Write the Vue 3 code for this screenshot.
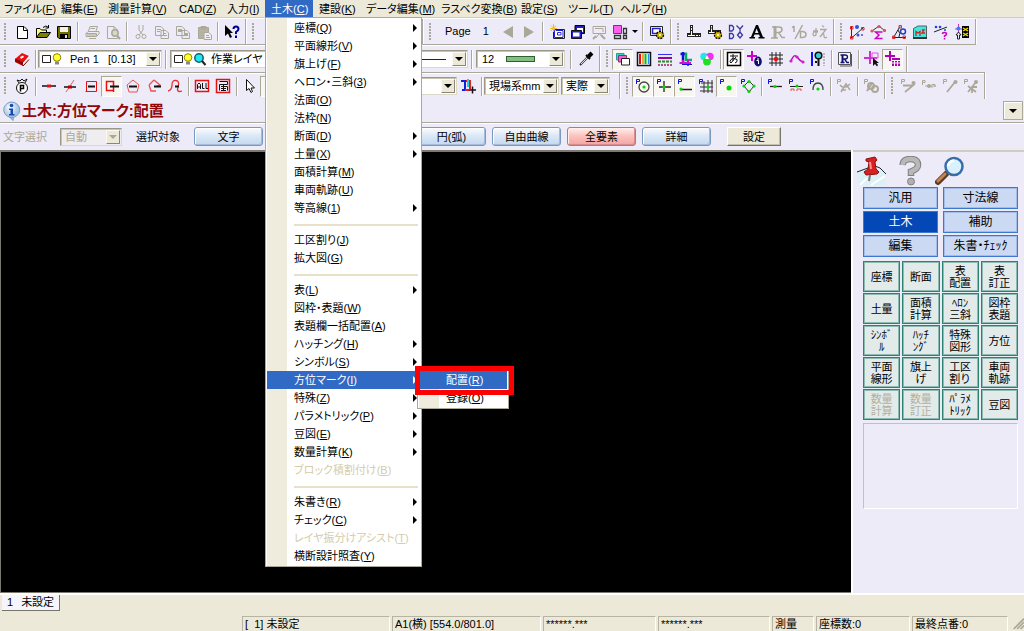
<script setup>
const menubar = [
  ['ファイル', 'F'], ['編集', 'E'], ['測量計算', 'V'], ['CAD', 'Z'], ['入力', 'I'], ['土木', 'C'],
  ['建設', 'K'], ['データ編集', 'M'], ['ラスベク変換', 'B'], ['設定', 'S'], ['ツール', 'T'], ['ヘルプ', 'H'],
]

const civilMenu = [
  { t: '座標', k: 'Q', sub: true }, { t: '平面線形', k: 'V', sub: true }, { t: '旗上げ', k: 'F', sub: true },
  { t: 'ヘロン・三斜', k: '3', sub: true }, { t: '法面', k: 'O' }, { t: '法枠', k: 'N' },
  { t: '断面', k: 'D', sub: true }, { t: '土量', k: 'X', sub: true }, { t: '面積計算', k: 'M' },
  { t: '車両軌跡', k: 'U' }, { t: '等高線', k: '1', sub: true }, { sep: true },
  { t: '工区割り', k: 'J' }, { t: '拡大図', k: 'G' }, { sep: true },
  { t: '表', k: 'L', sub: true }, { t: '図枠・表題', k: 'W' }, { t: '表題欄一括配置', k: 'A' },
  { t: 'ハッチング', k: 'H', sub: true }, { t: 'シンボル', k: 'S', sub: true },
  { t: '方位マーク', k: 'I', sub: true, open: true }, { t: '特殊', k: 'Z', sub: true },
  { t: 'パラメトリック', k: 'P', sub: true }, { t: '豆図', k: 'E', sub: true },
  { t: '数量計算', k: 'K', sub: true }, { t: 'ブロック積割付け', k: 'B', off: true }, { sep: true },
  { t: '朱書き', k: 'R', sub: true }, { t: 'チェック', k: 'C', sub: true },
  { t: 'レイヤ振分けアシスト', k: 'T', off: true }, { t: '横断設計照査', k: 'Y' },
]

const g = '#aca899'
const P = (d, c = '#000', w = 1) => `<path d="${d}" fill="none" stroke="${c}" stroke-width="${w}"/>`
const F = (d, c = '#000') => `<path d="${d}" fill="${c}"/>`
const pMark = (c = '#1414e0') => P('M1.5 6V1.5H4.5V3.5H2', c)
const dot = (x, y, c = '#00d800', r = 1.6) => `<circle cx="${x}" cy="${y}" r="${r}" fill="${c}"/>`

const icons = {
  fresh: '<path d="M3.5 2.5H10L13.5 6V14.5H3.5Z" fill="#fff" stroke="#000"/>' + P('M9.500 2.500V6.500H13.500'),
  open: '<path d="M1.500 13.500V4.500H5L6.500 6H11.500V8.500" fill="#ffff80" stroke="#000"/><path d="M1.500 13.500L5 8.500H15.500L12 13.500Z" fill="#808000" stroke="#000"/>' + P('M8 3.500Q11 .5 13.500 3.500M13.500 1V4H10.500'),
  save: '<path d="M2 2.500H14.500V14.500H3L1.500 13V2.500Z" fill="#707000" stroke="#000"/>' + F('M4 3H12V8H4Z', '#f4f2e6') + F('M4 10H12V14.500H4Z') + F('M9 11H11V14H9Z', '#ddd'),
  print: P('M4.500 7L6 2.500H13.500L12 7M4 7.500L2 9.500V12.500H12.500L15 10V7.500H4M2 9.500H12.500V12M5 14.500H12M6.500 4.500H11', g) + F('M3 10H12V12H3Z', '#cbc7b9'),
  preview: P('M2.500 2.500H9L12.500 6V14.500H2.500ZM9 2.500V6H12', g) + `<circle cx="10" cy="9" r="3.200" fill="#dad6ca" stroke="${g}" stroke-width="1.500"/>` + P('M12 11.500L15 15', g, 2),
  cut: P('M6 1V6L10 11M10 1V6L6 11', g) + `<circle cx="5" cy="12.500" r="2" fill="none" stroke="${g}"/><circle cx="11" cy="12.500" r="2" fill="none" stroke="${g}"/>`,
  copy: P('M1.500 2.500H7L9.500 5V11.500H1.500ZM7 6.500H12L14.500 9V14.500H7Z', g) + P('M3 5.500H7M3 7.500H6M9 9.500H12M9 11.500H13', g),
  copy2: P('M1.500 2.500H7L9.500 5V11.500H1.500ZM7 6.500H12L14.500 9V14.500H7Z', g) + F('M3 5H7V8H3ZM9 9H13V12H9Z', g),
  clip: `<path d="M2.500 3.500H12.500V14.500H2.500Z" fill="#b6b2a4" stroke="${g}"/><path d="M8 8.500H12.500L15.500 11V15.500H8Z" fill="#f0eef4" stroke="${g}"/>` + P('M5 2.500H10V5H5ZM10 11.500H13M10 13.500H14', g),
  help: F('M1 1V12L4 9.500L6 14L8 13L6 9H9Z') + P('M9.500 5Q9.500 2.500 12 2.500T14.500 5Q14.500 6.500 12 8V10', '#000090', 2) + F('M11 11.500H13V14H11Z', '#000090'),
  left: F('M13 2V14L3 8Z', g), right: F('M3 2V14L13 8Z', g),
  win1: '<path d="M4.500 5.500H15.500V14.500H4.500Z" fill="#fff" stroke="#222" /><path d="M5.500 6.500H14V13.500H5.500Z" fill="#fff" stroke="#2020d8"/><path d="M8.500 8.500H12V11H8.500Z" fill="#fff" stroke="#3030d0"/>' + P('M4.500 0V8M1 4.500H8M2 1.500L7 7M7 1.500L2 7', '#f0c020'),
  win2: '<path d="M5 1.500H14.500V9.500H5Z" fill="#2020c0" stroke="#000"/><path d="M7 4H13V8H7Z" fill="#fff"/><path d="M1.500 6.500H11.500V14.500H1.500Z" fill="#2020c0" stroke="#111"/><path d="M3 8.500H9.500V12.500H3Z" fill="#fff"/>',
  win3: P('M2 2.500H14.500V9.500H2ZM4 4.500H12V8M5 14L8 10M12 14L8 9', g) + P('M2 15L5 12M10 11L14 15', g, 2),
  pinkgrid: '<path d="M1.500 1.500H9.500V9.500H1.500Z" fill="#ff60f0" stroke="#c02020"/>' + P('M11.500 4.500H14.500V9.500H11.500ZM2.500 11.500H8.500V14.500H2.500ZM11.500 11.500H14.500V14.500H11.500Z', '#333', 1.300),
  wingear: '<path d="M1.500 2.500H13.500V11.500H1.500Z" fill="#fff" stroke="#222"/><path d="M3.500 4.500H11V9.500H3.500Z" fill="#fff" stroke="#2020d8" stroke-width="1.500"/><circle cx="11" cy="11" r="3.500" fill="#c8b400" stroke="#000" stroke-width="1.300" stroke-dasharray="2 1"/>' + dot(11, 11, '#fff', 1),
  ruler: F('M4 1H7V9H15V13H1V9H4Z', '#222') + P('M5.500 2V12M2 11.500H14', '#fff') + P('M4 3.500H7M4 6.500H7M9.500 9V13M12.500 9V13', '#222'),
  rulergear: F('M3 1H6V6H14V10H1V6H3Z', '#222') + P('M4.500 2V8M2 8.500H13', '#fff') + P('M3 4H6M9.500 6V10', '#222') + '<circle cx="11" cy="11" r="3.500" fill="#d8b400" stroke="#000" stroke-width="1.300" stroke-dasharray="2 1"/>' + dot(11, 11, '#fff', 1),
  ddyy: P('M1.500 1.500V7H4L5.500 5.500V3L4 1.500ZM1.500 9.500V14.500H4L5.500 13V11L4 9.500ZM8.500 1.500L12 5V8M15 1.500L12 5M12 8L9.500 11L12 14L14.500 11Z', '#3838a0', 1.300),
  boldA: F('M7 1H9L14 13H15.500V14.500H9.500V13H11L10 10.500H5.500L4.500 13H6V14.500H.5V13H2ZM7.500 4.500L6 9H9.500Z'),
  boldR: P('M2 3H9Q12 3 12 5.500T9 8.500H5M8.500 8.500L12 13.500H15M1 14H8', g, 1.500) + P('M5 2V14', g, 3),
  frac: P('M3 2V8M1 3.500L3 2M11.500 1L4 15M9.500 7.500V13.500H12Q15 13 15 10.500T12 7.500Z', g, 1.500),
  kana: P('M1 7H6M4 4V11Q1 13 1 10T6 8M10 1.500L12 3M8 5.500H14L8 13M10 10Q12 9 12 12T15 13', g, 1.300),
  s1: P('M2.500 3V14M2.500 14L14 4', '#303030') + P('M1.500 2.500H4V5H1.500ZM12.500 3.500H15V6H12.500ZM1.500 12.500H4V15H1.500Z', '#e02020') + dot(8, 3, '#3050e0', 2) + dot(9, 11, '#3050e0', 1.500) + dot(13, 11, '#3050e0', 1),
  s2: P('M2 7L9 2L15 7', '#333') + dot(9, 2.500, '#e05050') + dot(2, 7, '#e05050') + dot(14.500, 6.500, '#e05050') + P('M12.500 8H5.500L9 11L5.500 14.500H12.500', '#d000c0', 1.500),
  s3: P('M9 2.500L2.500 13.500H14M7 6Q10 9 8 13', '#222') + P('M8 1.500H10.500V4H8ZM1.500 12H4V14.500H1.500ZM12 12H14.500V14.500H12Z', '#e03030') + `<circle cx="12" cy="7.500" r="2.500" fill="none" stroke="#2040c0" stroke-width="1.500"/>`,
  s4: '<path d="M1.500 4.500L6 2H14.500V13.500H1.500Z" fill="#40e8e0" stroke="#506060"/>' + P('M4 12V7.500L6 9L8 7.500V12M10 6H12L10 9H13', '#d02020', 1.300) + F('M1 13H15V15H1Z', '#333'),
  s5: P('M1 8L14 3', '#222') + dot(3, 3, '#2040e0', 1.300) + dot(7, 3, '#2040e0', 1.300) + dot(12, 6, '#2040e0', 1) + P('M9.500 10Q9.500 8.500 11.500 8.500T13.500 10Q13.500 11 11.500 12V13M11.500 14V15.500', '#d000c0', 1.500),
  s6: P('M4.500 0V9M1 5H8', '#d030c0') + dot(4.500, 4.500, '#3080ff', 2) + P('M4.500 8L2 11H3.500V15H5.500V11H7Z', '#222') + F('M8 2H15V14H8Z') + P('M9 4L14 7M14 4L9 7M9 9L14 12M14 9L9 12', '#f0e000', 1.300),
  book: F('M1 8L8 2L15 5L9 12Z', '#e81010') + F('M1 8V11L9 15V12Z', '#a80000') + F('M9 12V15L15 8.500V5Z', '#f4f4f4') + P('M9 15L15 8.500M1 8L9 12', '#600000') + F('M6 6L9 4.500L10 6L7 8Z', '#fff'),
  dropper: P('M2 14L10 6', '#333', 2) + P('M3 13L10 6', '#ddd') + P('M8 4L12 8', '#000', 2) + P('M10.500 5.500L14 2', '#000', 4),
  layers: '<path d="M1.500 2.500H9V9H1.500Z" fill="#30d8d0" stroke="#20a0a0"/><path d="M3.500 4.500H11.500V11H3.500Z" fill="#f060d0" stroke="#903070"/><path d="M6.500 7.500H14.500V14H6.500Z" fill="#fff" stroke="#222"/>',
  stripes: '<path d="M1.500 1.500H14.500V14.500H1.500Z" fill="#fff" stroke="#111" stroke-width="1.500"/>' + P('M4 3V13', '#e01010', 2) + P('M7 3V13', '#ff8000', 1.500) + P('M9.500 3V13', '#00c000', 2) + P('M12.500 3V13', '#2090ff', 1.500),
  lines: P('M1 3.500H15', '#3030ff') + P('M1 7H15', '#a000a0', 2) + '<path d="M1 10.500H15" stroke="#209020" stroke-width="2" stroke-dasharray="3 1"/><path d="M1 14H15" stroke="#a02060" stroke-width="1.500" stroke-dasharray="2 1"/>',
  lmag: P('M5 1V11M2.500 3H7', '#1010d8', 2.500) + P('M8 1.500V9H14', '#00b060', 2.500) + P('M1.500 12H13M10 9V15M5 9V14', '#d010d0', 2) + P('M4 13.500H14', '#1010d8'),
  rgb: '<circle cx="5" cy="5.500" r="3.700" fill="#20e8e8"/><circle cx="11" cy="5.500" r="3.700" fill="#f030f0"/><circle cx="8" cy="10.500" r="3.900" fill="#20e020"/>' + F('M8 4L10 8L6 8Z', '#fff'),
  abox: '<path d="M1.500 1.500H14.500V14.500H1.500Z" fill="#fff" stroke="#000" stroke-width="1.500"/>' + P('M4 5H12M7 3V10M10 6L5 12Q3 11 5 8.500T11 8.500Q12 11 9 12', '#111'),
  plus0: P('M5 0V10M0 5H10', '#d000d0', 2) + `<ellipse cx="11" cy="10.500" rx="3.800" ry="5" fill="#101070"/>` + P('M11 7V9M9.500 9.500H11.500V13', '#fff', 1),
  gridred: P('M4 1V15M8 1V15M12 1V15M1 4H15M1 8H15M1 12H15', '#222') + dot(8, 8, '#e81010', 2.200),
  curve: P('M2 10Q5 2 8 6T14 11', '#c000c0', 1.500) + dot(2, 10, '#d020d0') + dot(8, 6, '#d020d0') + dot(14, 11, '#d020d0'),
  pins: P('M2 1V15', '#1010ff', 2) + '<circle cx="8.500" cy="4.500" r="3.300" fill="#40c8d0" stroke="#111" stroke-width="1.500"/>' + P('M8.500 8V15M5 11H7', '#111', 2) + '<path d="M14 2V15" stroke="#888" stroke-dasharray="2 1"/>',
  rbox: '<path d="M1.500 1.500H13.500V13.500H1.500Z" fill="#f4f4fb" stroke="#555"/>' + P('M14.500 3V15H3', '#555') + P('M3.500 4H8Q10.500 4 10.500 6T8 8H6M7.500 8L10 11.500H12M3.500 11.500H7.500', '#101070', 1.300) + P('M5.500 4V11', '#101070', 2),
  magcur: P('M6 0V13M0 7H13', '#d030d0', 2) + '<path d="M8 2H14V7H8Z" fill="none" stroke="#e050e0"/>' + F('M9 7V15L11 13L13 15.500L14 14L12.500 12H15Z', '#111'),
  magcal: P('M5 0V10M0 5H10', '#b000b0', 2) + '<path d="M7 7H15V15H7Z" fill="#b000b0"/>' + P('M7 9.500H15M7 12H15M9.500 9V15M12.500 9V15', '#fff'),
  bag: '<circle cx="8" cy="10" r="5.500" fill="#fff" stroke="#111"/>' + P('M5 5L3 2L6 3L8 1L10 3L13 1L11 5', '#111') + P('M6.500 13.500V7.500H9.500V10.500H7', '#000', 1.500),
  n1: P('M1 8H15', '#111', 1.500) + F('M6 6.500H10V9.500H6Z', '#e81010'),
  n2: P('M2 9H14', '#111', 1.500) + P('M4 14L12 2', '#e06060') + F('M6 7.500H10V10.500H6Z', '#c00000'),
  n3: P('M3.500 3.500H13.500V13.500H2.500', '#e81010') + P('M5 8.500H12', '#111', 2) + P('M3.500 3.500V13.500', '#e81010'),
  n4: P('M2.500 12.500V3.500H9.500V12.500ZM9.500 8V14', '#e81010', 1.500) + P('M6 8.500H15', '#111', 2),
  n5: P('M8 2L14 7L12 14H4L2 7Z', '#e85050') + P('M4 8.500H12', '#111', 2),
  n6: P('M8 2L14 7L11 8M3 7L8 2M3 7L5 13H10', '#e85050', 1.300) + P('M8 8.500H15', '#111', 2),
  n7: P('M1 13Q5 12 5 7T9 2.500T11 9T15 13', '#e83030', 1.300) + P('M8 8.500H12', '#111', 2),
  all: P('M1.500 2.500H14.500V13.500H1.500Z', '#e81010', 1.500) + P('M3.500 11V6.500L5 5L6.500 6.500V11M3.500 9H6.500M8.500 5V10.500H10.500M12 5V10.500H14', '#111'),
  zoku: P('M1.500 1.500H14.500V14.500H1.500Z', '#e81010', 1.500) + P('M4.500 3.500H12.500V6.500H4.500V12.500M6 8.500H12.500V12.500M6 10.500H11M8.500 7V12M6 12.500H11', '#111'),
  arrow: '<path d="M4.500 1.500V12.500L7 10.500L9 14.500L10.500 13.500L9 10H12.500Z" fill="#fff" stroke="#111"/>',
  lcur: P('M1 3H5V12M2 12H7', '#1020e0', 2) + P('M6 3H10V11', '#e02020', 2) + P('M8 1V9', '#20d0e0', 2) + P('M5 12H9', '#e02020', 2) + P('M9 12H16M12.500 8.500V15.500', '#111', 1.500),
  p1: pMark() + '<circle cx="9" cy="9" r="5" fill="none" stroke="#444" stroke-width="1.300"/>' + dot(9, 9),
  p2: pMark() + P('M8 3V14M3 9H15', '#222', 1.300) + dot(8, 9),
  p3: pMark() + P('M3 11.500H15', '#222', 1.500) + dot(4, 11),
  p4: P('M6 3V15M10 2V15M14 2V15M3 5H15M2 9H15M2 13H15', '#333') + pMark() + dot(10, 9),
  p5: pMark() + dot(10, 10, '#00d800', 2.500),
  p6: pMark() + P('M9 3L14 8L9 14L4 8Z', '#333') + dot(9, 3.500) + dot(14, 8) + dot(9, 13.500) + dot(4, 8),
  p7: pMark() + P('M3 8.500H15', '#222', 1.300) + dot(8, 8.500),
  p8: pMark() + P('M2 8.500H15', '#222') + dot(9, 8) + P('M3 13V11H6V13M9 13V11H13V13', '#e05050'),
  p9: pMark() + P('M4 12Q4 5 9 5T14 12', '#444', 1.300) + dot(9, 11),
  q1: pMark(g) + P('M5 14L10 6L14 12M4 7Q8 12 14 6M5 12H10', g, 1.500),
  q2: pMark(g) + `<circle cx="8" cy="8" r="3" fill="none" stroke="${g}" stroke-width="2"/><circle cx="12" cy="11" r="3" fill="none" stroke="${g}" stroke-width="2"/>` + P('M4 13L9 5', g, 2),
  r1: pMark(g) + P('M3 7.500H13L5 14', g, 1.800) + dot(13.500, 5, g, 2),
  r2: P('M1.500 7V2.500H4V4.500H2M4 8H11', g) + dot(8, 8, g, 2) + P('M11 10V6.500H14V9M12 8H15', g),
  r3: pMark(g) + P('M5 14L13 4', g, 1.800) + dot(13.500, 4, g, 2),
  r4: pMark(g) + P('M5 8L13 14M5 14L13 4M9 9V15M9 9L14 9', g, 1.800) + dot(13, 4, g, 2),
}

const row1a = ['fresh', 'open', 'save', '|', 'print', 'preview', '|', 'cut', 'copy', 'copy2', 'clip', '|', 'help']
const row1c = ['win1', 'win2', 'win3', 'pinkgrid']
const row1d = ['ruler', 'rulergear', 'ddyy', 'boldA', 'boldR', 'frac', 'kana']
const row1e = ['s1', 's2', 's3', 's4', 's5', 's6']
const row2 = ['*layers', 'stripes', 'lines', 'lmag', 'rgb', '|', '*abox', 'plus0', 'gridred', 'curve', 'pins', '|', 'rbox', '|', 'magcur', '*magcal']
const row3a = ['bag', '|', 'n1', 'n2', 'n3', '*n4', 'n5', 'n6', 'n7', '|', 'all', 'zoku', '|', 'arrow']
const row3b = ['*p1', '*p2', '*p3', 'p4', '*p5', 'p6', '|', 'p7', 'p8', 'p9', '|', 'q1', '|', 'q2']
const row3c = ['r1', 'r2', 'r3', 'r4']
const art = (n) => icons[n.replace('*', '')]

const filters = ['円(弧)', '自由曲線', '全要素', '詳細']
const categories = ['汎用', '寸法線', '土木', '補助', '編集', '朱書・ﾁｪｯｸ']
const tools = [
  '座標', '断面', '表\n配置', '表\n訂正', '土量', '面積\n計算', 'ﾍﾛﾝ\n三斜', '図枠\n表題',
  'ｼﾝﾎﾞ\nﾙ', 'ﾊｯﾁ\nﾝｸﾞ', '特殊\n図形', '方位', '平面\n線形', '旗上\nげ', '工区\n割り', '車両\n軌跡',
  '数量\n計算', '数量\n訂正', 'ﾊﾟﾗﾒ\nﾄﾘｯｸ', '豆図',
]
</script>

<template>
  <div class="app">
    <header class="menubar">
      <button v-for="m in menubar" :key="m[0]" class="mb" :class="{ on: m[0] === '土木' }">{{ m[0] }}(<u>{{ m[1] }}</u>)</button>
    </header>

    <div class="rows">
      <div class="row r1">
        <div class="bar first">
          <i class="grip"></i>
          <template v-for="(n, i) in row1a" :key="i">
            <i v-if="n === '|'" class="sep"></i>
            <button v-else class="ic" :aria-label="n"><svg viewBox="0 0 16 16" v-html="art(n)"></svg></button>
          </template>
        </div>
        <div class="bar covered1"><i class="grip"></i></div>
        <div class="bar">
          <i class="grip"></i>
          <span class="page"><span>Page</span><span>1</span></span>
          <button class="ic" aria-label="prev"><svg viewBox="0 0 16 16" v-html="art('left')"></svg></button>
          <button class="ic" aria-label="next"><svg viewBox="0 0 16 16" v-html="art('right')"></svg></button>
          <i class="sep"></i>
          <button v-for="n in row1c" :key="n" class="ic" :aria-label="n"><svg viewBox="0 0 16 16" v-html="art(n)"></svg></button>
          <button class="mini" aria-label="more"><i class="tri small"></i></button>
          <i class="sep"></i>
          <button class="ic" aria-label="wingear"><svg viewBox="0 0 16 16" v-html="art('wingear')"></svg></button>
        </div>
        <div class="bar">
          <i class="grip"></i>
          <button v-for="n in row1d" :key="n" class="ic" :aria-label="n"><svg viewBox="0 0 16 16" v-html="art(n)"></svg></button>
        </div>
        <div class="bar">
          <i class="grip"></i>
          <button v-for="n in row1e" :key="n" class="ic" :aria-label="n"><svg viewBox="0 0 16 16" v-html="art(n)"></svg></button>
        </div>
      </div>

      <div class="row r2">
        <div class="bar first wide2">
          <i class="grip"></i>
          <button class="ic" aria-label="book"><svg viewBox="0 0 16 16" v-html="art('book')"></svg></button>
          <i class="sep"></i>
          <label class="combo pen">
            <svg class="pre" viewBox="0 0 24 14"><path d="M2.5 3.500H10.500V10.500H2.500Z" fill="#fff" stroke="#222" /><circle cx="17" cy="5.500" r="3.800" fill="#ffff30" stroke="#908000" /><path d="M15 9.500H19V12.500H15Z" fill="#888" /></svg>
            <select aria-label="pen"><option>Pen 1 &nbsp; [0.13]</option></select><i class="dd"><i class="tri"></i></i>
          </label>
          <i class="sep"></i>
          <label class="combo layer">
            <svg class="pre long" viewBox="0 0 36 14"><path d="M2.500 3.500H10.500V10.500H2.500Z" fill="#fff" stroke="#222" /><circle cx="16" cy="5.500" r="3.800" fill="#ffff30" stroke="#908000" /><path d="M14 9.500H18V12.500H14Z" fill="#888" /><circle cx="27" cy="6" r="4.200" fill="#20e8f0" stroke="#106070" stroke-width="1.500" /><path d="M30 9L33.500 13" stroke="#222" stroke-width="2" /></svg>
            <select aria-label="layer"><option>作業レイヤ</option></select>
          </label>
          <label class="combo linetype"><span class="stroke"></span><i class="dd"><i class="tri"></i></i></label>
          <i class="sep"></i>
          <label class="combo color">
            <select aria-label="color"><option>12</option></select><span class="swatch"></span><i class="dd"><i class="tri"></i></i>
          </label>
          <i class="sep"></i>
          <button class="ic drop" aria-label="dropper"><svg viewBox="0 0 16 16" v-html="art('dropper')"></svg></button>
        </div>
        <div class="bar">
          <i class="grip"></i>
          <template v-for="(n, i) in row2" :key="i">
            <i v-if="n === '|'" class="sep"></i>
            <button v-else class="ic" :class="{ down: n[0] === '*' }" :aria-label="n"><svg viewBox="0 0 16 16" v-html="art(n)"></svg></button>
          </template>
        </div>
      </div>

      <div class="row r3">
        <div class="bar first wide3">
          <i class="grip"></i>
          <template v-for="(n, i) in row3a" :key="i">
            <i v-if="n === '|'" class="sep"></i>
            <button v-else class="ic" :class="{ down: n[0] === '*' }" :aria-label="n"><svg viewBox="0 0 16 16" v-html="art(n)"></svg></button>
          </template>
          <button class="ic down" aria-label="select"></button>
          <label class="combo scale"><select aria-label="scale"><option></option></select><i class="dd"><i class="tri"></i></i></label>
          <button class="ic" aria-label="lcur"><svg viewBox="0 0 16 16" v-html="art('lcur')"></svg></button>
          <i class="sep"></i>
          <label class="combo unit"><select aria-label="unit"><option>現場系mm</option></select><i class="dd"><i class="tri"></i></i></label>
          <label class="combo real"><select aria-label="real"><option>実際</option></select><i class="dd"><i class="tri"></i></i></label>
        </div>
        <div class="bar">
          <i class="grip"></i>
          <template v-for="(n, i) in row3b" :key="i">
            <i v-if="n === '|'" class="sep"></i>
            <button v-else class="ic" :class="{ down: n[0] === '*' }" :aria-label="n"><svg viewBox="0 0 16 16" v-html="art(n)"></svg></button>
          </template>
        </div>
        <div class="bar">
          <i class="grip"></i>
          <button v-for="n in row3c" :key="n" class="ic" :aria-label="n"><svg viewBox="0 0 16 16" v-html="art(n)"></svg></button>
        </div>
      </div>
    </div>

    <div class="titlebar">
      <svg class="info" viewBox="0 0 20 20"><defs><radialGradient id="ball" cx=".4" cy=".3"><stop offset="0" stop-color="#fff" /><stop offset="1" stop-color="#a4c4e4" /></radialGradient></defs><path d="M10 1A8.500 7.800 0 1 1 9 16.500L12 19.500L12.500 16.500A8.500 7.800 0 0 1 10 1Z" fill="url(#ball)" stroke="#7a9cc0" /><circle cx="10.500" cy="4.500" r="1.800" fill="#1848b0" /><path d="M8 7.500H12V13H13.500V14.500H8V13H9.500V9H8Z" fill="#1848b0" /></svg>
      <h1>土木:方位マーク:配置</h1>
      <button class="expand" aria-label="expand"><i class="tri big"></i></button>
    </div>

    <div class="options">
      <label class="dim" for="textsel">文字選択</label>
      <span class="combo auto"><select id="textsel" disabled><option>自動</option></select><i class="dd"><i class="tri"></i></i></span>
      <span class="target">選択対象</span>
      <div class="filters">
        <button class="fb text">文字</button>
        <button v-for="f in filters" :key="f" class="fb" :class="{ red: f === '全要素' }">{{ f }}</button>
      </div>
      <button class="set">設定</button>
    </div>

    <main class="work">
      <div class="canvas"></div>
      <aside class="side">
        <div class="big3">
          <svg viewBox="0 0 30 30"><path d="M0 16L12 13L18 11L29 18V29H0Z" fill="#dcf1f5" /><path d="M0 16L11 12L18 10L23 12L29 18" fill="none" stroke="#222" /><path d="M3 29L10 22M14 29L28 20" stroke="#fff" stroke-width="2" /><path d="M9 3L18 1L20 4L18 6L19 13L22 16L20 18L9 19L7 16L11 13L12 6L9 5Z" fill="#d82020" stroke="#8c1010" /><path d="M13 6L14 13" stroke="#ff9090" stroke-width="2" /><path d="M13 19L12 25" stroke="#777" stroke-width="2" /></svg>
          <svg viewBox="0 0 24 30"><path d="M3.500 9Q4 3 11.500 3T19 9Q19 13 12 15.500V20" fill="none" stroke="#808080" stroke-width="6.500" /><path d="M3.500 9Q4 3 11.500 3T19 9Q19 13 12 15.500V19" fill="none" stroke="#b8b8b8" stroke-width="4.500" /><circle cx="12" cy="25.500" r="3.500" fill="#b0b0b0" stroke="#808080" /></svg>
          <svg viewBox="0 0 30 30"><path d="M11 18L3 26" stroke="#5a3a28" stroke-width="6" stroke-linecap="round" /><path d="M10 18L3 25" stroke="#c48450" stroke-width="3" stroke-linecap="round" /><circle cx="19" cy="10.500" r="8.500" fill="#d9f1fc" stroke="#386ea8" stroke-width="2.500" /><path d="M13 10Q14 5 19 4.500" fill="none" stroke="#fff" stroke-width="2.500" /></svg>
        </div>
        <div class="cats">
          <button v-for="c in categories" :key="c" :class="{ on: c === '土木' }">{{ c }}</button>
        </div>
        <div class="tools">
          <button v-for="(t, i) in tools" :key="t" :disabled="i === 16 || i === 17">{{ t }}</button>
        </div>
        <div class="box"></div>
      </aside>
    </main>

    <div class="sheets"><button class="sheet"><span>1</span><span>未設定</span></button></div>
    <footer class="status">
      <span class="empty"></span>
      <span>[ &nbsp;1] 未設定</span>
      <span>A1(横) [554.0/801.0]</span>
      <span>******.***</span>
      <span>******.***</span>
      <span>測量</span>
      <span>座標数:0</span>
      <span>最終点番:0</span>
      <svg viewBox="0 0 14 14"><path d="M2 14L14 2M6 14L14 6M10 14L14 10" stroke="#aca899" stroke-width="2" /></svg>
    </footer>

    <ul class="menu">
      <li v-for="(m, i) in civilMenu" :key="i" :class="{ rule: m.sep }">
        <template v-if="!m.sep">
          <button class="mi" :class="{ on: m.open }" :disabled="m.off">
            <span>{{ m.t }}(<u>{{ m.k }}</u>)</span><i v-if="m.sub" class="sub"></i>
          </button>
          <ul v-if="m.open" class="menu submenu">
            <li><button class="mi on"><span>配置(<u>R</u>)</span></button></li>
            <li><button class="mi"><span>登録(<u>O</u>)</span></button></li>
            <li class="mark" aria-hidden="true"></li>
          </ul>
        </template>
      </li>
    </ul>
  </div>
</template>

<style>
body { margin: 0; background: #ece9d8; }
</style>

<style scoped>
.app {
  position: relative; display: flex; flex-direction: column; min-height: 100vh; overflow: hidden;
  font: 11px/14px "Liberation Sans", "Noto Sans CJK JP", sans-serif; font-feature-settings: "palt";
  color: #000; background: #eeebf8;
}
.app * { box-sizing: border-box; }
button, select { font: inherit; font-feature-settings: inherit; color: inherit; margin: 0; padding: 0; border: 0; background: none; white-space: nowrap; }
i { display: block; flex: none; }
u { text-underline-offset: 1px; }
.menubar {
  display: grid; grid-template-columns: 57px 47px 71px 48px 42px 48px 47px 75px 80px 47px 52px 54px;
  height: 18px; background: #ece9d8; border-bottom: 1px solid #d0ccc0;
}
.mb { text-align: left; padding-left: 4px; }
.mb.on { background: #316ac5; color: #fff; padding-left: 6px; }
.mb:nth-child(n+7) { padding-left: 6px; }
.row { display: flex; width: fit-content; height: 27px; border-top: 1px solid #fff; }
.r1 { border-bottom: 1px solid #aca899; }
.r3 { border-top: 1px solid #aca899; box-shadow: inset 0 1px #fff; }
.bar { display: flex; align-items: center; padding-right: 3px; border-right: 1px solid #aca899; box-shadow: 1px 0 #fff; }
.covered1 { width: 177px; }
.wide2 { width: 600px; }
.wide3 { width: 620px; }
.grip { width: 12px; height: 18px; background: repeating-linear-gradient(#aca899 0 2px, transparent 2px 3px) 6px 0 / 2px 100% no-repeat; }
.first .grip { width: 11px; background-position-x: 4px; }
.sep { width: 7px; height: 19px; background: linear-gradient(90deg, #aca899 1px, #fff 1px) 3px 0 / 2px 100% no-repeat; }
.r2 .sep, .r3 .sep { width: 6px; }
.ic { flex: none; width: 21px; height: 21px; display: grid; place-items: center; }
.ic svg { width: 16px; height: 16px; }
.ic.down { background: #f7f6f1; border: 1px solid #aca899; border-right-color: #fff; border-bottom-color: #fff; }
.drop { margin-left: 2px; }
.page { width: 62px; padding: 0 0 2px 10px; display: flex; gap: 12px; }
.mini { width: 9px; display: grid; place-items: center; }
.tri { width: 0; height: 0; border: 4px solid transparent; border-top-color: #000; border-bottom: 0; }
.tri.small { border-width: 3px; border-bottom: 0; }
.combo {
  flex: none; display: flex; align-items: center; height: 18px; padding: 1px; background: #fff;
  border: 1px solid #9c9888; border-right-color: #dcd8c8; border-bottom-color: #dcd8c8; box-shadow: inset 1px 1px #c8c4b4;
}
.combo select { appearance: none; flex: 1; min-width: 0; padding-left: 3px; }
.dd {
  width: 14px; height: 14px; display: grid; place-items: center; background: #ece9d8;
  border: 1px solid #fbfaf4; border-right-color: #8a8778; border-bottom-color: #8a8778;
}
.pre { flex: none; width: 24px; height: 14px; }
.pre.long { width: 36px; }
.pen { width: 124px; }
.pen select { padding-left: 6px; }
.layer { width: 180px; margin-left: 2px; }
.linetype { flex: 1; }
.stroke { flex: 1; height: 1px; margin-right: 6px; background: #222; }
.color { width: 89px; margin: 0 2px; }
.color select { flex: none; width: 28px; padding-left: 4px; }
.swatch { flex: 1; height: 6px; margin-right: 14px; background: #80c080; border: 1px solid #306030; }
.scale { flex: 1; margin-left: 2px; }
.unit { width: 75px; }
.real { width: 49px; margin: 0 6px 0 2px; }
.titlebar { display: flex; align-items: center; height: 24px; padding: 0 1px; border-bottom: 1px solid #aca899; }
.info { width: 20px; height: 20px; }
h1 { flex: 1; margin: 0 0 0 1px; font-size: 15px; line-height: 20px; font-weight: bold; color: #900808; }
.expand { width: 20px; height: 19px; display: grid; place-items: center; background: #ece9d8; border: 1px solid #aca899; box-shadow: inset 1px 1px #fff; }
.options { display: flex; align-items: center; height: 27px; padding-left: 3px; box-shadow: inset 0 1px #fff; }
.dim { width: 57px; color: #aca899; }
.auto { width: 62px; color: #aca899; background: #efedf0; }
.auto select { opacity: 1; color: #aca899; }
.auto .tri { border-top-color: #aca899; }
.target { width: 58px; margin-left: 14px; }
.filters { display: flex; gap: 6px; }
.fb {
  width: 69px; height: 19px; border: 1px solid #7c98bc; border-radius: 3px;
  background: linear-gradient(#fafcff, #dce8f6 45%, #c2d8f0); box-shadow: inset 1px 1px #fff, inset -1px -1px #a4bcdc;
}
.fb.text { margin-right: 148px; }
.fb.red { border-color: #b87878; background: linear-gradient(#fff0ee, #fcc4c0 45%, #f4a4a2); box-shadow: inset 1px 1px #fff0ee, inset -1px -1px #d88c8c; }
.set { width: 54px; height: 19px; margin-left: 16px; background: #ece9d8; border: 1px solid #fff; border-right-color: #77746a; border-bottom-color: #77746a; box-shadow: inset -1px -1px #c4c0b0; }
.work { flex: 1; display: flex; }
.canvas { flex: 1; background: #000; border: 1px solid #7c7a70; border-top-width: 2px; border-right: 0; }
.side { width: 173px; padding: 6px 6px 12px 12px; box-shadow: inset 2px 0 #fff, inset 0 2px #d0ccc4; }
.big3 { display: flex; gap: 12px; height: 31px; margin-left: -6px; }
.big3 svg { width: 30px; height: 30px; }
.big3 svg:nth-child(2) { width: 24px; }
.cats { display: grid; grid-template-columns: 1fr 1fr; gap: 2px 5px; }
.cats button { height: 22px; font-size: 12px; line-height: 18px; background: #ccd9f2; border: 1px solid #3c78d0; box-shadow: inset 0 0 0 1px #a4bce8; }
.cats .on { background: #0448b8; color: #fff; box-shadow: none; }
.tools { display: grid; grid-template-columns: repeat(4, 1fr); gap: 1px 2px; margin-top: 4px; font-feature-settings: normal; }
.tools button { height: 31px; font-size: 11px; line-height: 12px; white-space: pre-line; background: #e2ebea; border: 1px solid #2c8470; box-shadow: inset 0 0 0 1px #8cbcb0; }
.tools button:disabled { color: #b4b0a0; }
.box { height: 86px; margin-top: 3px; border: 1px solid #c4c0bc; border-right-color: #fff; border-bottom-color: #fff; }
.sheets { height: 23px; background: #ece9d8; border-top: 2px solid #fff; }
.sheet { display: flex; gap: 8px; margin-left: 2px; padding: 0 5px 1px; background: #f6f5fb; border-right: 1px solid #77746a; border-bottom: 1px solid #77746a; }
.status {
  display: grid; grid-template-columns: 240px 148px 149px 113px 112px 42px 94px 96px 1fr; gap: 2px;
  height: 15px; overflow: hidden; background: #ece9d8;
}
.status span { padding-left: 2px; white-space: nowrap; border-top: 1px solid #b8b4a4; border-left: 1px solid #b8b4a4; border-right: 1px solid #fff; }
.status .empty { border: 0; }
.status svg { width: 12px; height: 14px; justify-self: end; }
.menu {
  position: absolute; left: 265px; top: 17px; width: 157px; margin: 0; padding: 1px; list-style: none;
  background: linear-gradient(90deg, #fff 1px, #efecde 1px 21px, #fff 21px); border: 1px solid #aca899;
}
.menu li { position: relative; }
.mi { display: flex; align-items: center; width: 100%; height: 18px; padding-left: 27px; }
.mi span { flex: 1; text-align: left; }
.mi.on { background: #316ac5; color: #fff; }
.mi:disabled { color: #d4ccaa; }
.sub { width: 0; height: 0; margin-right: 3px; border: 4px solid transparent; border-left-color: currentColor; border-right: 0; }
.menu .rule { height: 14px; padding: 7px 2px 0 27px; }
.rule::after { content: ""; display: block; height: 2px; background: #e6e1c8; }
.submenu { left: 150px; top: -2px; width: 92px; }
.submenu .mark { position: absolute; left: -3px; top: -4px; width: 99px; height: 29px; border: 5px solid #f00; }
</style>
